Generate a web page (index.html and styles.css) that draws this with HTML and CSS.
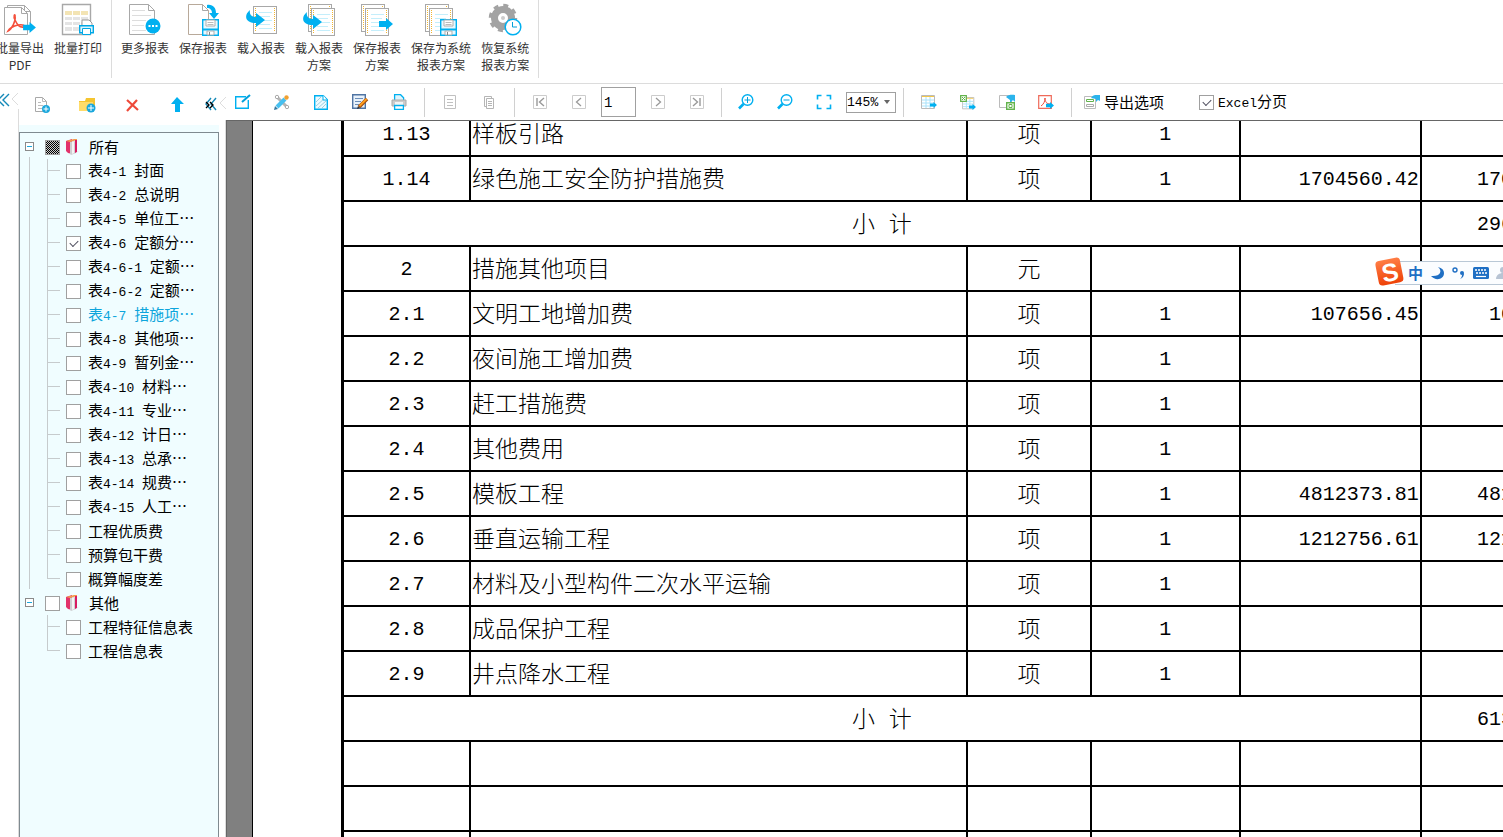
FILE: index.html
```html
<!DOCTYPE html>
<html lang="zh-CN">
<head>
<meta charset="utf-8">
<title>报表</title>
<link rel="stylesheet" href="styles.css">
</head>
<body>
<svg class="defs" aria-hidden="true">
  <symbol id="sheet" viewBox="0 0 24 28">
    <rect x=".5" y=".5" width="23" height="27" fill="#fff" stroke="#a8a8a8"/>
    <path d="M2.500 2v24M21.500 2v24" stroke="#f2b632" stroke-dasharray="1 1"/>
    <path d="M6 6.500h13M6 10.500h11M6 14.500h13M6 18.500h11M6 22.500h13" stroke="#c4eefb"/>
  </symbol>
  <symbol id="arrow" viewBox="0 0 14 12"><path d="M0 3h7V0l7 6-7 6V9H0z" fill="#00b0f0"/></symbol>
  <symbol id="hook" viewBox="0 0 19 17"><path d="M4 0C-1 4-1 9 3 11.500c2 1.200 4 1.500 7 1.500v4l9-7-9-7v4C6 7 3 5 4 0z" fill="#00b0f0"/></symbol>
  <symbol id="floppy" viewBox="0 0 17 17"><path d="M.7.7h15.600v15.600H.7z" fill="#e8f8fe" stroke="#00b0f0" stroke-width="1.400"/><path d="M4 1h9v6H4z" fill="#fff" stroke="#b0b0b0"/><path d="M5.500 3.500h6M5.500 5.500h6" stroke="#bbb"/><path d="M1 10.500h15" stroke="#00b0f0" stroke-width="2"/><path d="M5 12h7v4H5z" fill="#fff" stroke="#b0b0b0"/><path d="M7.500 13v3" stroke="#888"/></symbol>
  <symbol id="folder" viewBox="0 0 16 16"><path d="M1 2l6-2v15l-4-1-2-2z" fill="#e2336b"/><path d="M1 2l8-2h3v1L5 3z" fill="#f59a4b"/><path d="M5 3l6-1v12l-5 2-1-1z" fill="#cfcfd2"/><path d="M7 3h2v11l-2 1z" fill="#f4f4f4"/><path d="M10 1l2 0v12l-2 1z" fill="#d81b60"/><path d="M6 15.500l8-3-1.500 0-3 2z" fill="#d8dde0"/></symbol>
  <symbol id="grid" viewBox="0 0 16 16"><path d="M.5.5h13v13H.5z" fill="#fff" stroke="#bbb"/><path d="M1 1.500h12" stroke="#f2c84b"/><path d="M1 5h12M1 8h12M1 11h12M5 2v11M9 2v11" stroke="#a8e2fa"/></symbol>
</svg>

<header class="ribbon">
  <div class="ribbon-group">
    <button class="tool"><svg viewBox="0 0 32 32"><path d="M3.500 4V1.500h17l6 6V28M20.500 1.500v6h6" fill="none" stroke="#a8a8a8"/><path d="M.5 3.500h17l6 6v21H.5z" fill="#fff" stroke="#a8a8a8"/><path d="M17.500 3.500v6h6" fill="none" stroke="#a8a8a8"/><path d="M4 27c4-2 8-10 7-15 0-3-2 0 0 4s4 8 9 7c2-1-1-3-6-2S5 25 4 27z" fill="none" stroke="#f4503c" stroke-width="1.600"/><use href="#arrow" x="19" y="18" width="13" height="11"/></svg><span>批量导出<br>PDF</span></button>
    <button class="tool"><svg viewBox="0 0 32 32"><path d="M.5.5h28v30H.5z" fill="#fff" stroke="#a8a8a8" stroke-width="1.400"/><path d="M3 7h23v4H3z" fill="#f3e4b4"/><path d="M3 13h23v3H3zM3 18h23v3H3zM3 23h14v4H3z" fill="#e4e4e4"/><path d="M10.500 7v21M18.500 7v21" stroke="#fff"/><path d="M20 22v-6h7l3 3v4" fill="#fff" stroke="#999"/><path d="M17.700 21.700h13.600v7H17.700z" fill="#dff5fd" stroke="#00a8e6" stroke-width="1.400"/><path d="M20.500 24.500h8v6h-8z" fill="#fff" stroke="#00a8e6"/></svg><span>批量打印</span></button>
  </div>
  <div class="ribbon-group">
    <button class="tool"><svg viewBox="0 0 32 32"><path d="M.5.5h19l6 6v24H.5z" fill="#fff" stroke="#a8a8a8"/><path d="M19.500.5v6h6" fill="none" stroke="#a8a8a8"/><path d="M3 6.500h13M3 11.500h19M3 16.500h14M3 21.500h12M3 26.500h14" stroke="#ddd"/><circle cx="24" cy="22" r="7.500" fill="#00b0f0"/><path d="M19.500 22h2M23 22h2M26.500 22h2" stroke="#fff" stroke-width="2"/></svg><span>更多报表</span></button>
    <button class="tool"><svg viewBox="0 0 32 32"><path d="M1.500.5h14l6 6v24h-20z" fill="#fff" stroke="#b8a99a"/><path d="M15.500.5v6h6" fill="none" stroke="#a8a8a8"/><path d="M20 1c6-1 9 3 9 8h3l-5 6-5-6h3c0-3-2-5-5-5z" fill="#00b0f0"/><use href="#floppy" x="15" y="15" width="17" height="17"/></svg><span>保存报表</span></button>
    <button class="tool"><svg viewBox="0 0 32 32"><use href="#sheet" x="8" y="2" width="24" height="28"/><use href="#hook" x="1" y="5" width="19" height="19"/></svg><span>载入报表</span></button>
    <button class="tool"><svg viewBox="0 0 32 32"><use href="#sheet" x="5" y="0" width="24" height="28"/><use href="#sheet" x="8" y="4" width="24" height="28"/><use href="#hook" x="0" y="7" width="19" height="19"/></svg><span>载入报表<br>方案</span></button>
    <button class="tool"><svg viewBox="0 0 32 32"><use href="#sheet" x="0" y="0" width="24" height="28"/><use href="#sheet" x="4" y="4" width="24" height="28"/><use href="#arrow" x="18" y="14" width="14" height="12"/></svg><span>保存报表<br>方案</span></button>
    <button class="tool"><svg viewBox="0 0 32 32"><use href="#sheet" x="0" y="0" width="24" height="28"/><use href="#sheet" x="4" y="4" width="24" height="28"/><use href="#floppy" x="15" y="15" width="17" height="17"/></svg><span>保存为系统<br>报表方案</span></button>
    <button class="tool"><svg viewBox="0 0 32 32"><circle cx="14" cy="14" r="8.500" fill="none" stroke="#a3a3a3" stroke-width="7"/><circle cx="14" cy="14" r="12.500" fill="none" stroke="#a3a3a3" stroke-width="3.500" stroke-dasharray="4.900 4.900"/><circle cx="14" cy="14" r="2" fill="#ccc"/><circle cx="24" cy="23" r="7.800" fill="#fff" stroke="#00b0f0" stroke-width="1.500"/><path d="M23.500 18v5h4.500" fill="none" stroke="#00a0d8"/></svg><span>恢复系统<br>报表方案</span></button>
  </div>
</header>

<main class="work">
  <div class="gutter"><svg viewBox="0 0 19 18"><path d="M4 3L-2 9l6 6M9 3L3 9l6 6" fill="none" stroke="#1489b8" stroke-width="1.400"/><path d="M18 2l-6 6 6 6" fill="none" stroke="#ddd"/></svg></div>

  <aside class="sidebar">
    <div class="side-tools">
      <button class="icon" aria-label="新建"><svg viewBox="0 0 16 16"><path d="M1.500.5h7l4 4v10h-11z" fill="#fff" stroke="#a8a8a8"/><path d="M8.500.5v4h4M4 5.500h3M4 8.500h5M4 11.500h4" fill="none" stroke="#bbb"/><circle cx="12" cy="12" r="4" fill="#1aa7dc"/><path d="M9.500 12h5M12 9.500v5" stroke="#fff"/></svg></button>
      <button class="icon" aria-label="新建文件夹"><svg viewBox="0 0 16 16"><path d="M0 4h6l1-3h9v9l-2 4H0z" fill="#f5c52f"/><path d="M0 5h14v9H0z" fill="#ffdc6a"/><circle cx="12" cy="11" r="4.500" fill="#1aa7dc"/><path d="M9 11h6M12 8v6" stroke="#fff"/></svg></button>
      <button class="icon" aria-label="删除"><svg viewBox="0 0 16 16"><path d="M3 3l11 10M13 3L3 14" stroke="#ee4a3a" stroke-width="2.200"/></svg></button>
      <button class="icon" aria-label="上移"><svg viewBox="0 0 16 16"><path d="M8 0l7 7h-4v8H6V7H2z" fill="#00b0f0"/></svg></button>
      <button class="icon fold" aria-label="折叠"><svg viewBox="0 0 16 16"><path d="M8 1L3 7l5 6M13 1L8 7l5 6" fill="none" stroke="#1489b8" stroke-width="1.400"/><path d="M3 5l3 3-3 3M7 5l3 3-3 3" fill="none" stroke="#000" stroke-width="1.300"/></svg></button>
    </div>
    <ul class="tree">
      <li class="branch open">
        <div class="root"><button class="toggle" aria-label="收起"></button><input type="checkbox" id="all" class="mixed"><svg viewBox="0 0 16 16"><use href="#folder"/></svg><label for="all">所有</label></div>
        <ul>
          <li><input type="checkbox" id="t1"><label for="t1">表<span class="num">4-1 </span>封面</label></li>
          <li><input type="checkbox" id="t2"><label for="t2">表<span class="num">4-2 </span>总说明</label></li>
          <li><input type="checkbox" id="t3"><label for="t3">表<span class="num">4-5 </span>单位工…</label></li>
          <li><input type="checkbox" id="t4" checked><label for="t4">表<span class="num">4-6 </span>定额分…</label></li>
          <li><input type="checkbox" id="t5"><label for="t5">表<span class="num">4-6-1 </span>定额…</label></li>
          <li><input type="checkbox" id="t6"><label for="t6">表<span class="num">4-6-2 </span>定额…</label></li>
          <li class="current"><input type="checkbox" id="t7"><label for="t7">表<span class="num">4-7 </span>措施项…</label></li>
          <li><input type="checkbox" id="t8"><label for="t8">表<span class="num">4-8 </span>其他项…</label></li>
          <li><input type="checkbox" id="t9"><label for="t9">表<span class="num">4-9 </span>暂列金…</label></li>
          <li><input type="checkbox" id="t10"><label for="t10">表<span class="num">4-10 </span>材料…</label></li>
          <li><input type="checkbox" id="t11"><label for="t11">表<span class="num">4-11 </span>专业…</label></li>
          <li><input type="checkbox" id="t12"><label for="t12">表<span class="num">4-12 </span>计日…</label></li>
          <li><input type="checkbox" id="t13"><label for="t13">表<span class="num">4-13 </span>总承…</label></li>
          <li><input type="checkbox" id="t14"><label for="t14">表<span class="num">4-14 </span>规费…</label></li>
          <li><input type="checkbox" id="t15"><label for="t15">表<span class="num">4-15 </span>人工…</label></li>
          <li><input type="checkbox" id="t16"><label for="t16">工程优质费</label></li>
          <li><input type="checkbox" id="t17"><label for="t17">预算包干费</label></li>
          <li><input type="checkbox" id="t18"><label for="t18">概算幅度差</label></li>
        </ul>
      </li>
      <li class="branch">
        <div class="root"><button class="toggle" aria-label="收起"></button><input type="checkbox" id="other"><svg viewBox="0 0 16 16"><use href="#folder"/></svg><label for="other">其他</label></div>
        <ul>
          <li><input type="checkbox" id="t19"><label for="t19">工程特征信息表</label></li>
          <li><input type="checkbox" id="t20"><label for="t20">工程信息表</label></li>
        </ul>
      </li>
    </ul>
  </aside>
  <div class="splitter"><svg viewBox="0 0 7 14"><path d="M7 1L1 7l6 6" fill="none" stroke="#ddd"/></svg></div>

  <section class="viewer">
    <div class="toolbar">
      <div class="group">
        <button class="icon" aria-label="编辑"><svg viewBox="0 0 16 16"><path d="M11 2.700H.7v11.600h12.600V6" fill="none" stroke="#00b0f0" stroke-width="1.400"/><path d="M7 8l8-7" stroke="#00a0dc" stroke-width="2"/></svg></button>
        <button class="icon" aria-label="设计"><svg viewBox="0 0 16 16"><path d="M3 3l10 10" stroke="#b5b5b5" stroke-width="3"/><circle cx="3" cy="3" r="1.700" fill="#fff" stroke="#aaa"/><circle cx="13" cy="13" r="1.700" fill="#fff" stroke="#aaa"/><path d="M3 13l8-8" stroke="#47c0f0" stroke-width="4"/><path d="M0 16l1-4 3 3z" fill="#3478a0"/><circle cx="12.500" cy="3.500" r="2.200" fill="#f0a030"/></svg></button>
        <button class="icon" aria-label="页面"><svg viewBox="0 0 16 16"><path d="M1.700 1.700h8.600l4 4v9.600H1.700z" fill="#eefaff" stroke="#00b0f0" stroke-width="1.400"/><path d="M3 8l5-5M3 12l9-8M5 14l8-7M9 14l4-4" stroke="#8cc4d4" stroke-width=".8"/><path d="M10 1v5h4" fill="#fff" stroke="#00b0f0"/></svg></button>
        <button class="icon" aria-label="批注"><svg viewBox="0 0 16 16"><path d="M.7.7h12.600v13.600H.7z" fill="#e8f1fa" stroke="#4f74a3" stroke-width="1.400"/><path d="M3 4.500h8M3 7.500h6M3 10.500h4" stroke="#6a8db8"/><path d="M7 13l8-8" stroke="#9b4a10" stroke-width="3.500"/><path d="M7.500 12l7-7" stroke="#ff9c1a" stroke-width="2"/><path d="M5 15l1-3 2 2z" fill="#333"/></svg></button>
        <button class="icon" aria-label="打印"><svg viewBox="0 0 16 16"><path d="M3.600 7V.7h6l3 3V7" fill="#dff5fd" stroke="#00b0f0" stroke-width="1.300"/><path d="M1 6h14v6H1z" fill="#ccc" stroke="#aaa"/><path d="M4 8h8v3H4z" fill="#f4f4f4"/><path d="M3.600 11.500h8.800v3.800H3.600z" fill="#fff" stroke="#00b0f0" stroke-width="1.300"/></svg></button>
      </div>
      <div class="group">
        <button class="icon" aria-label="单页"><svg viewBox="0 0 16 16"><path d="M2.500 1.500h11v13h-11zM5 5.500h6M5 8.500h6M5 11.500h6" fill="none" stroke="#c0c0c0"/></svg></button>
        <button class="icon" aria-label="复制"><svg viewBox="0 0 16 16"><path d="M5 12.500H3.500v-10h7V4M5.500 4.500h7v10h-7zM7 7.500h4M7 9.500h4M7 11.500h4" fill="none" stroke="#b5b5b5"/></svg></button>
      </div>
      <div class="group paging">
        <button class="icon" aria-label="首页"><svg viewBox="0 0 16 16"><path d="M1.500 1.500h13v13h-13z" fill="#fff" stroke="#ccc"/><path d="M5 4v8M12 4L7.500 8l4.500 4" fill="none" stroke="#999" stroke-width="1.400"/></svg></button>
        <button class="icon" aria-label="上一页"><svg viewBox="0 0 16 16"><path d="M1.500 1.500h13v13h-13z" fill="#fff" stroke="#ccc"/><path d="M10 4L5.500 8l4.500 4" fill="none" stroke="#999" stroke-width="1.300"/></svg></button>
        <input class="page-no" type="text" value="1" aria-label="页码">
        <button class="icon" aria-label="下一页"><svg viewBox="0 0 16 16"><path d="M1.500 1.500h13v13h-13z" fill="#fff" stroke="#ccc"/><path d="M6 4l4.500 4L6 12" fill="none" stroke="#999" stroke-width="1.300"/></svg></button>
        <button class="icon" aria-label="末页"><svg viewBox="0 0 16 16"><path d="M1.500 1.500h13v13h-13z" fill="#fff" stroke="#ccc"/><path d="M11 4v8M4 4l4.500 4L4 12" fill="none" stroke="#999" stroke-width="1.400"/></svg></button>
      </div>
      <div class="group zooming">
        <button class="icon" aria-label="放大"><svg viewBox="0 0 16 16"><circle cx="9.500" cy="6" r="5.300" fill="#fff" stroke="#00b0f0" stroke-width="1.400"/><path d="M6.500 6h6M9.500 3v6" stroke="#00a0dc"/><path d="M5.500 10L1 14.500" stroke="#00b0f0" stroke-width="2.600"/></svg></button>
        <button class="icon" aria-label="缩小"><svg viewBox="0 0 16 16"><circle cx="9.500" cy="6" r="5.300" fill="#fff" stroke="#00b0f0" stroke-width="1.400"/><path d="M6.500 6h6" stroke="#00a0dc"/><path d="M5.500 10L1 14.500" stroke="#00b0f0" stroke-width="2.600"/></svg></button>
        <button class="icon" aria-label="全屏"><svg viewBox="0 0 16 16"><path d="M1.500 5.500V1.500h4M10.500 1.500h4v4M14.500 10.500v4h-4M5.500 14.500h-4v-4" fill="none" stroke="#00b0f0" stroke-width="1.600"/></svg></button>
        <span class="combo"><select aria-label="缩放"><option>145%</option></select><svg viewBox="0 0 7 4"><path d="M0 0h6L3 4z" fill="#666"/></svg></span>
      </div>
      <div class="group">
        <button class="icon" aria-label="导出表格"><svg viewBox="0 0 16 16"><use href="#grid" y="1" width="16" height="16"/><use href="#arrow" x="9" y="8" width="7" height="6"/></svg></button>
        <button class="icon" aria-label="导出工作表"><svg viewBox="0 0 16 16"><use href="#grid" x="2" y="3" width="14" height="14"/><path d="M.7 1.700h5.600v5.600H.7z" fill="#fff" stroke="#63b34c" stroke-width="1.300"/><path d="M2 3l3 3M5 3L2 6" stroke="#63b34c"/><use href="#arrow" x="9" y="10" width="7" height="6"/></svg></button>
        <button class="icon" aria-label="导出全部"><svg viewBox="0 0 16 16"><path d="M.5 1.500h12v12H.5z" fill="#fff" stroke="#bbb"/><path d="M7 3c3-3 7-2 9-2v7l-2-2-3 3V6z" fill="#2bb4ec"/><path d="M7.700 8.700h7.600v6.600H7.700z" fill="#fff" stroke="#63b34c" stroke-width="1.400"/><path d="M10 10.500h3v3h-3z" fill="none" stroke="#63b34c"/></svg></button>
        <button class="icon" aria-label="导出PDF"><svg viewBox="0 0 16 16"><path d="M.7 1.700h12.600v12.600H.7z" fill="#fff" stroke="#ef6a5a" stroke-width="1.200"/><path d="M3 12c3-2 4-5 4-8 0 4 2 6 5 6" fill="none" stroke="#ee4a3a"/><use href="#arrow" x="8" y="8" width="8" height="7"/></svg></button>
      </div>
      <div class="group options">
        <button class="text-btn"><svg viewBox="0 0 16 16"><path d="M.5 2.500h11v12H.5z" fill="#fff" stroke="#bbb"/><path d="M2.500 5.500h7v2h-7z" fill="#fff" stroke="#63b34c"/><path d="M2.500 10.500h7v2h-7z" fill="#fff" stroke="#aaa"/><path d="M7 4c2-4 6-3 9-3v6l-2-1-2 2V5z" fill="#2bb4ec"/></svg>导出选项</button>
        <span class="check"><input type="checkbox" id="paging" checked><label for="paging"><span class="num">Excel</span>分页</label></span>
      </div>
    </div>

    <div class="canvas">
      <div class="page">
        <table>
          <colgroup><col class="c-no"><col class="c-name"><col class="c-unit"><col class="c-qty"><col class="c-price"><col class="c-sum"></colgroup>
          <tbody>
            <tr><td>1.13</td><td>样板引路</td><td>项</td><td>1</td><td></td><td></td></tr>
            <tr><td>1.14</td><td>绿色施工安全防护措施费</td><td>项</td><td>1</td><td>1704560.42</td><td>1704560.42</td></tr>
            <tr class="subtotal"><td colspan="5">小 计</td><td>2966120.50</td></tr>
            <tr><td>2</td><td>措施其他项目</td><td>元</td><td></td><td></td><td></td></tr>
            <tr><td>2.1</td><td>文明工地增加费</td><td>项</td><td>1</td><td>107656.45</td><td>107656.45</td></tr>
            <tr><td>2.2</td><td>夜间施工增加费</td><td>项</td><td>1</td><td></td><td></td></tr>
            <tr><td>2.3</td><td>赶工措施费</td><td>项</td><td>1</td><td></td><td></td></tr>
            <tr><td>2.4</td><td>其他费用</td><td>项</td><td>1</td><td></td><td></td></tr>
            <tr><td>2.5</td><td>模板工程</td><td>项</td><td>1</td><td>4812373.81</td><td>4812373.81</td></tr>
            <tr><td>2.6</td><td>垂直运输工程</td><td>项</td><td>1</td><td>1212756.61</td><td>1212756.61</td></tr>
            <tr><td>2.7</td><td>材料及小型构件二次水平运输</td><td>项</td><td>1</td><td></td><td></td></tr>
            <tr><td>2.8</td><td>成品保护工程</td><td>项</td><td>1</td><td></td><td></td></tr>
            <tr><td>2.9</td><td>井点降水工程</td><td>项</td><td>1</td><td></td><td></td></tr>
            <tr class="subtotal"><td colspan="5">小 计</td><td>6132786.87</td></tr>
            <tr><td></td><td></td><td></td><td></td><td></td><td></td></tr>
            <tr><td></td><td></td><td></td><td></td><td></td><td></td></tr>
            <tr><td></td><td></td><td></td><td></td><td></td><td></td></tr>
          </tbody>
        </table>
      </div>
    </div>
  </section>
</main>

<div class="ime">
  <svg class="ime-logo" viewBox="0 0 30 30"><defs><linearGradient id="og" x2="0" y2="1"><stop stop-color="#ff7d45"/><stop offset="1" stop-color="#ee4208"/></linearGradient></defs><g transform="rotate(-11 15 15)"><rect x="2" y="2" width="25" height="25" rx="4" fill="url(#og)"/><text x="15" y="24" text-anchor="middle" class="ime-s">S</text></g></svg>
  <div class="ime-bar">
    <span>中</span>
    <svg viewBox="0 0 16 16"><path d="M9 2c5 4 2 10-7 9 4 5 13 4 13-3 0-3-2-5-6-6z" fill="#1f6fc4"/></svg>
    <svg viewBox="0 0 16 16"><circle cx="4" cy="5" r="2" fill="none" stroke="#1f6fc4" stroke-width="1.400"/><circle cx="11" cy="8" r="2" fill="#1f6fc4"/><path d="M13 8c0 3-1 5-4 6 1-1 2-2 2-4z" fill="#1f6fc4"/></svg>
    <svg viewBox="0 0 16 16"><rect y="2" width="16" height="12" rx="1.500" fill="#1f6fc4"/><path d="M2 5h12M3 8h11" stroke="#fff" stroke-width="1.500" stroke-dasharray="2 1"/><path d="M3 11.500h10" stroke="#fff" stroke-width="1.200"/></svg>
    <svg viewBox="0 0 16 16"><circle cx="8" cy="5" r="3" fill="#b8c4d4"/><path d="M1 14c0-8 14-8 14 0z" fill="#b8c4d4"/></svg>
  </div>
</div>
</body>
</html>
```
FILE: styles.css
```css
* { box-sizing: border-box; }
body {
  margin: 0;
  height: 100vh;
  display: flex;
  flex-direction: column;
  overflow: hidden;
  position: relative;
  background: #fff;
  color: #000;
  font: 15px/24px "Noto Sans CJK SC", sans-serif;
}
button { border: 0; padding: 0; background: none; font: inherit; color: inherit; }
ul { list-style: none; margin: 0; padding: 0; }
svg { display: block; flex: none; overflow: visible; }
.defs { position: absolute; width: 0; height: 0; }
.num { font-family: "Liberation Mono", monospace; font-size: 13px; white-space: pre; }

.ribbon {
  flex: none;
  height: 84px;
  border-bottom: 1px solid #dcdcdc;
  display: flex;
  margin-left: -9px;
}
.ribbon-group {
  display: flex;
  height: 78px;
  padding: 4px 4px 0 0;
  margin-right: 4px;
  border-right: 1px solid #dcdcdc;
}
.tool {
  display: flex;
  flex-direction: column;
  align-items: center;
  gap: 3px;
  padding: 0 5px;
  font-size: 12px;
  line-height: 17px;
  color: #333;
}
.tool svg { width: 32px; height: 32px; }

.work { flex: 1; min-height: 0; display: flex; }
.gutter { flex: none; width: 19px; display: flex; flex-direction: column; padding-top: 7px; }
.gutter svg { width: 19px; height: 18px; }
.gutter::after { content: ""; flex: 1; border-right: 1px solid #dcdcdc; }

.sidebar { flex: none; width: 200px; display: flex; flex-direction: column; }
.side-tools {
  flex: none;
  height: 41px;
  padding-left: 15px;
  display: flex;
  align-items: center;
  gap: 29px;
}
.fold { margin-left: -11px; }
.icon { flex: none; width: 16px; }
.icon svg { width: 16px; height: 16px; }
.tree {
  flex: 1;
  min-height: 0;
  overflow: hidden;
  margin-top: 7px;
  padding-top: 2px;
  background: #f0fdff;
  border: 1px solid #7f8a90;
  border-bottom: 0;
  box-shadow: 0 -7px #f0fdff;
}
.root { display: flex; align-items: center; height: 24px; padding-left: 5px; }
.root svg { width: 16px; height: 16px; margin: 0 8px 0 5px; }
.toggle {
  width: 9px;
  height: 9px;
  margin: 0 11px 2px 0;
  border: 1px solid #8a8a8a;
  background: linear-gradient(#1aa7dc, #1aa7dc) center / 5px 1px no-repeat #fff;
}
.open { background: linear-gradient(#c6cbcd, #c6cbcd) 9px 22px / 1px 432px no-repeat; }
.branch ul li {
  display: flex;
  align-items: center;
  height: 24px;
  padding-left: 46px;
  gap: 7px;
  background:
    linear-gradient(#c6cbcd, #c6cbcd) 27px 0 / 1px 24px no-repeat,
    linear-gradient(#c6cbcd, #c6cbcd) 27px 11px / 13px 1px no-repeat;
}
.branch ul li:last-child {
  background:
    linear-gradient(#c6cbcd, #c6cbcd) 27px 0 / 1px 12px no-repeat,
    linear-gradient(#c6cbcd, #c6cbcd) 27px 11px / 13px 1px no-repeat;
}
.branch .current { color: #0da5dc; }
label { white-space: nowrap; }
input[type="checkbox"] {
  appearance: none;
  flex: none;
  width: 15px;
  height: 15px;
  margin: 0;
  border: 1px solid #a0a0a0;
  background: #fff;
  display: grid;
  place-items: center;
}
input[type="checkbox"]:checked::before {
  content: "";
  width: 7px;
  height: 4px;
  border: solid #4d4d5d;
  border-width: 0 0 1px 1px;
  transform: translateY(-1px) rotate(-45deg);
}
input[type="checkbox"].mixed { background: repeating-conic-gradient(#000 0 25%, #ccc 0 50%) 0 0 / 2px 2px; }

.splitter { flex: none; width: 7px; display: flex; flex-direction: column; padding-top: 12px; gap: 10px; }
.splitter svg { width: 7px; height: 14px; }
.splitter::after { content: ""; flex: 1; border-right: 1px solid #dcdcdc; }

.viewer { flex: 1; min-width: 0; display: flex; flex-direction: column; }
.toolbar { flex: none; height: 36px; display: flex; align-items: center; }
.group {
  flex: none;
  height: 29px;
  display: flex;
  align-items: center;
  gap: 23px;
  padding: 0 17px;
  border-right: 1px solid #d0d0d0;
}
.group:first-child { padding-left: 9px; }
.paging { padding-right: 16px; }
.page-no {
  width: 35px;
  height: 30px;
  margin: 0 -9px;
  padding: 2px 2px 0;
  border: 1px solid #a0a0a0;
  font: 14px "Liberation Mono", monospace;
}
.zooming { padding: 0 7px 0 16px; }
.combo {
  width: 50px;
  height: 21px;
  margin-left: -9px;
  display: flex;
  align-items: center;
  border: 1px solid #a0a0a0;
}
.combo select {
  appearance: none;
  flex: 1;
  min-width: 0;
  padding: 0;
  border: 0;
  background: none;
  color: #000;
  font: 13px "Liberation Mono", monospace;
}
.combo svg { width: 7px; height: 4px; margin-right: 4px; }
.options { border: 0; padding: 0 12px; gap: 35px; }
.text-btn, .check { display: flex; align-items: center; gap: 4px; }
.text-btn svg { width: 16px; height: 16px; }

.canvas {
  flex: 1;
  min-height: 0;
  display: flex;
  overflow: hidden;
  padding-left: 25px;
  background: #808080;
  border: solid #666;
  border-width: 1px 0 0 1px;
}
.page {
  flex: 1;
  min-width: 0;
  overflow: hidden;
  padding-left: 88px;
  background: #fff;
  border-left: 1px solid #000;
}
table {
  table-layout: fixed;
  width: 1257px;
  margin-top: -9px;
  border-spacing: 0;
  border-left: 3px solid #000;
}
.c-no { width: 125px; }
.c-name { width: 497px; }
.c-unit { width: 123px; }
.c-qty { width: 149px; }
.c-price { width: 181px; }
.c-sum { width: 178px; }
td {
  height: 45px;
  padding: 2px 1px 0;
  border: solid #000;
  border-width: 0 0 2px 2px;
  text-align: center;
  font: 300 20px/24px "Liberation Mono", "Noto Sans CJK SC", monospace;
  white-space: nowrap;
}
td:first-child { border-left: 0; }
td:nth-child(2), td:nth-child(3), .subtotal td:first-child { padding-top: 4px; font-size: 23px; }
td:nth-child(2) { text-align: left; }
td:nth-child(n+5), .subtotal td:last-child { padding-top: 2px; text-align: right; font-size: 20px; }

.ime { position: absolute; right: 0; top: 257px; width: 128px; height: 30px; }
.ime-logo { position: absolute; left: 0; top: 0; z-index: 1; width: 30px; height: 30px; }
.ime-s { font: bold 25px "Liberation Sans", sans-serif; fill: #fff; }
.ime-bar {
  height: 24px;
  margin: 4px 0 0 20px;
  padding-left: 13px;
  display: flex;
  align-items: center;
  gap: 6px;
  overflow: hidden;
  background: #fbfdff;
  border: solid #b9c8d6;
  border-width: 1px 0;
  color: #1f6fc4;
  font-weight: bold;
}
.ime-bar svg { width: 16px; height: 16px; }
```
